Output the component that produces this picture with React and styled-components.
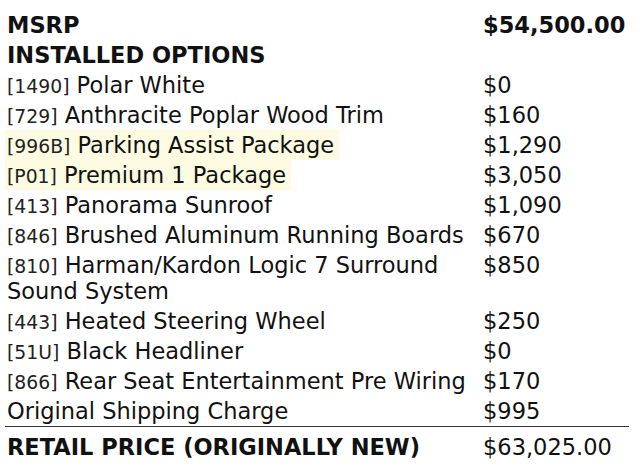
import React from 'react';
import styled, { createGlobalStyle } from 'styled-components';

const GlobalStyle = createGlobalStyle`
  body {
    margin: 0;
    background: #ffffff;
    font-family: "DejaVu Sans", "Liberation Sans", sans-serif;
  }
`;

const Sheet = styled.div`
  padding: 10px 11px 0 5px;
`;

const PriceTable = styled.table`
  width: 624px;
  border-collapse: collapse;
  color: #111111;
  font-size: 22.5px;
  line-height: 26px;
`;

const Row = styled.tr`
  border-top: ${(p) => (p.$total ? '1px solid #333333' : 'none')};
`;

const Label = styled.td`
  width: 472px;
  padding: ${(p) => (p.$total ? '7px 2px 2px' : '2px')};
  vertical-align: top;
  font-weight: ${(p) => (p.$bold ? 700 : 400)};
`;

const Price = styled.td`
  padding: ${(p) => (p.$total ? '7px 2px 2px' : '2px')};
  vertical-align: top;
  white-space: nowrap;
  font-weight: ${(p) => (p.$bold ? 700 : 400)};
`;

const Highlight = styled.span`
  background: ${(p) => (p.$on ? '#fdfbe1' : 'transparent')};
  margin-left: -2px;
  padding: 2px 5px 2px 2px;
  -webkit-box-decoration-break: clone;
  box-decoration-break: clone;
`;

const Code = styled.span`
  font-size: 18.8px;
  line-height: 1;
  color: #222222;
`;

const options = [
  { code: '1490', name: 'Polar White', price: '$0' },
  { code: '729', name: 'Anthracite Poplar Wood Trim', price: '$160' },
  { code: '996B', name: 'Parking Assist Package', price: '$1,290', hl: true },
  { code: 'P01', name: 'Premium 1 Package', price: '$3,050', hl: true },
  { code: '413', name: 'Panorama Sunroof', price: '$1,090' },
  { code: '846', name: 'Brushed Aluminum Running Boards', price: '$670' },
  { code: '810', name: 'Harman/Kardon Logic 7 Surround Sound System', price: '$850' },
  { code: '443', name: 'Heated Steering Wheel', price: '$250' },
  { code: '51U', name: 'Black Headliner', price: '$0' },
  { code: '866', name: 'Rear Seat Entertainment Pre Wiring', price: '$170' },
];

export default function App() {
  return (
    <>
      <GlobalStyle />
      <Sheet>
        <PriceTable>
          <tbody>
            <Row>
              <Label $bold>MSRP</Label>
              <Price $bold>$54,500.00</Price>
            </Row>
            <Row>
              <Label $bold>INSTALLED OPTIONS</Label>
              <Price />
            </Row>
            {options.map((o) => (
              <Row key={o.code}>
                <Label>
                  <Highlight $on={o.hl}>
                    <Code>[{o.code}]</Code> {o.name}
                  </Highlight>
                </Label>
                <Price>{o.price}</Price>
              </Row>
            ))}
            <Row>
              <Label>Original Shipping Charge</Label>
              <Price>$995</Price>
            </Row>
            <Row $total>
              <Label $bold $total>RETAIL PRICE (ORIGINALLY NEW)</Label>
              <Price $total>$63,025.00</Price>
            </Row>
          </tbody>
        </PriceTable>
      </Sheet>
    </>
  );
}
